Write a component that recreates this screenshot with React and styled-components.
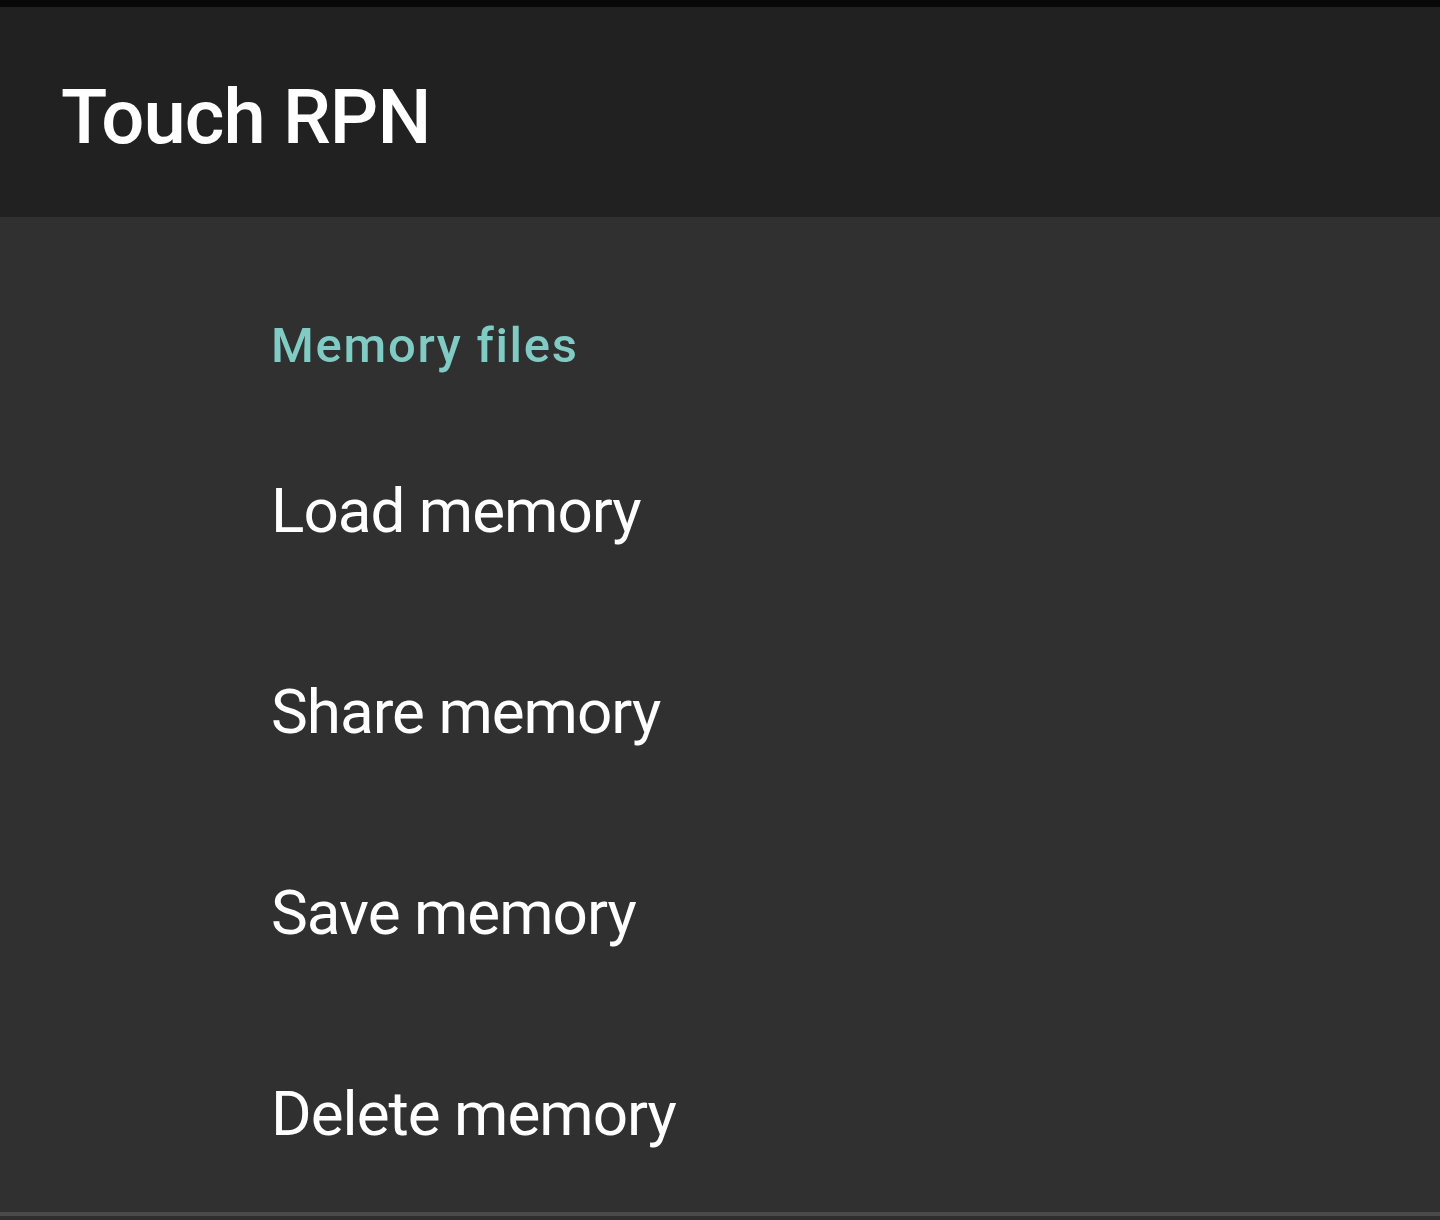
import React from "react";
import styled, { createGlobalStyle } from "styled-components";

const GlobalStyle = createGlobalStyle`
  html, body {
    margin: 0;
    padding: 0;
    background: #303030;
  }
  body {
    font-family: Roboto, "Noto Sans", "Liberation Sans", sans-serif;
  }
`;

const items = ["Load memory", "Share memory", "Save memory", "Delete memory"];

const App = () => {
    return (
        <>
            <GlobalStyle />
            <Screen>
                <StatusStrip />
                <AppBar>
                    <Title>Touch RPN</Title>
                </AppBar>
                <Content>
                    <Category>Memory files</Category>
                    <List>
                        {items.map((label) => (
                            <Item key={label}>{label}</Item>
                        ))}
                    </List>
                </Content>
                <NavEdge />
            </Screen>
        </>
    );
};

const Screen = styled.div`
    width: 1440px;
    height: 1220px;
    display: flex;
    flex-direction: column;
    background: #303030;
    overflow: hidden;
`;

const StatusStrip = styled.div`
    height: 7px;
    background: #080808;
    flex-shrink: 0;
`;

const AppBar = styled.header`
    height: 210px;
    flex-shrink: 0;
    background: #212121;
    display: flex;
    align-items: center;
    padding-left: 61px;
    padding-top: 10px;
    box-sizing: border-box;
`;

const Title = styled.h1`
    margin: 0;
    color: #ffffff;
    font-size: 76px;
    font-weight: 500;
    line-height: 1;
    letter-spacing: -0.9px;
`;

const Content = styled.main`
    height: 995px;
    flex-shrink: 0;
    overflow: hidden;
    padding: 99px 0 0 271px;
    box-sizing: border-box;
`;

const Category = styled.h2`
    margin: 0 0 34px 0;
    color: #80cbc4;
    font-size: 49px;
    font-weight: 500;
    line-height: 60px;
    letter-spacing: 1.7px;
`;

const List = styled.ul`
    list-style: none;
    margin: 0;
    padding: 0;
`;

const Item = styled.li`
    height: 201px;
    display: flex;
    align-items: center;
    color: #ffffff;
    font-size: 62px;
    font-weight: 400;
    line-height: 1;
    letter-spacing: -1px;
`;

const NavEdge = styled.div`
    height: 4px;
    flex-shrink: 0;
    background: #4a4a4a;
    border-bottom: 4px solid #2e2e2e;
`;

export default App;
